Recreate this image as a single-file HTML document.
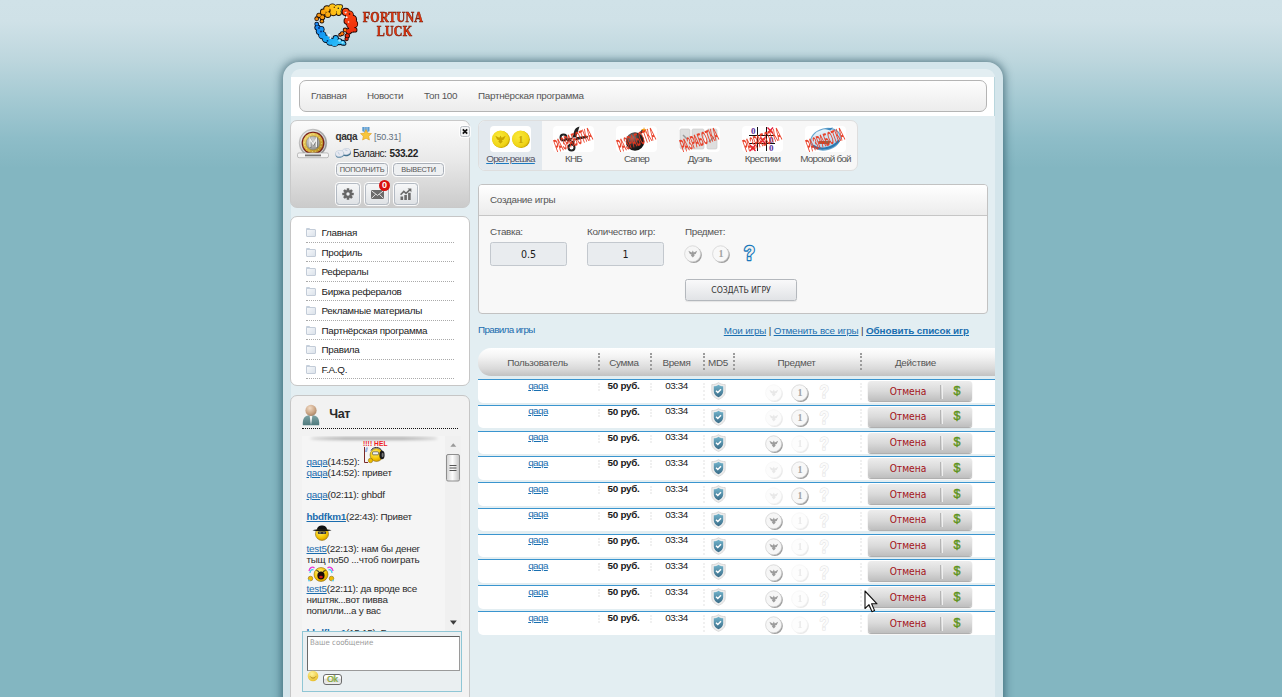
<!DOCTYPE html>
<html lang="ru">
<head>
<meta charset="utf-8">
<title>Fortuna Luck</title>
<style>
*{box-sizing:border-box;margin:0;padding:0}
html,body{width:1282px;height:697px;overflow:hidden}
body{position:relative;font-family:"Liberation Sans",sans-serif;font-size:9.9px;letter-spacing:-0.3px;color:#333;
 background:#83b6c1 linear-gradient(to bottom,#d0e2e8 0px,#cfe1e7 22px,#bed7de 58px,#a5cad3 98px,#8ebdc8 138px,#83b6c1 168px,#83b6c1 100%);}
a{color:#1a6fb0}
.abs{position:absolute}
#wrap{position:absolute;left:283px;top:62px;width:720px;height:660px;background:#d4e5eb;border-radius:16px 16px 0 0;box-shadow:0 0 10px 1px rgba(20,60,75,.65)}
#inner{position:absolute;left:8px;top:7px;width:704px;height:660px;background:#e3eef2;border-radius:9px 9px 0 0}
#white{position:absolute;left:0;top:8px;width:704px;height:39px;background:#fff;border-right:1px solid #b9d6dd}
#nav{position:absolute;left:8px;top:11px;width:688px;height:32px;border:1px solid #b4b4b4;border-radius:7px;background:linear-gradient(#fdfdfd,#ececec)}
#nav span{position:absolute;top:9px;color:#555;white-space:nowrap}
.panel{position:absolute;border:1px solid #c6c6c6;border-radius:7px;background:#fff}
.sbtn{position:absolute;top:42px;height:13px;border:1px solid #a9afb8;border-radius:3.5px;background:#eef0f2;box-shadow:0 0 0 1px rgba(255,255,255,.9);font-size:7.4px;line-height:11.5px;text-align:center;color:#555;letter-spacing:-.25px}
.ibtn{position:absolute;top:61.5px;width:24px;height:22.5px;border:1px solid #b3bac3;border-radius:3.5px;background:linear-gradient(#f6f7f8,#dfe2e5);box-shadow:0 0 0 1px rgba(255,255,255,.9)}
.mi{position:absolute;left:15px;width:148px;height:19.5px;padding-left:15.5px;line-height:19px;border-bottom:1px dotted #aaa;color:#222;white-space:nowrap}
.mi:before{content:"";position:absolute;left:.3px;top:6px;width:8px;height:6px;border:1px solid #c3ccd8;border-radius:1px;background:linear-gradient(135deg,#f6f8fb,#dbe2ea)}
.mi:after{content:"";position:absolute;left:.3px;top:5px;width:4px;height:2px;background:#c5cfdb;border-radius:1px 1px 0 0}
.cl{position:absolute;left:4.5px;line-height:11px;white-space:nowrap;color:#2b2b2b;letter-spacing:-.25px}
.cl a{color:#1a6cae}
.tab{position:absolute;top:0;width:63px;height:49px}
.tab.act{background:#e3e9ee}
.tab .ic{position:absolute;left:10.5px;top:4.5px;width:41px;height:26px;background:#fff;border-radius:4px;overflow:hidden}
.tab .ic svg{position:absolute;left:0;top:0}
.tab .lb{position:absolute;left:-10px;width:83px;top:31.5px;text-align:center;line-height:12px;color:#555;letter-spacing:-.78px;white-space:nowrap}
.tab.act .lb{text-decoration:underline;text-decoration-color:#1a7ac0;color:#556}
.st{position:absolute;left:-2.5px;top:10.8px;width:46px;text-align:center;font-weight:bold;font-size:5.9px;line-height:8px;letter-spacing:-.05px;color:#e8371f;transform:rotate(-20deg) scaleY(3.15);white-space:nowrap;opacity:.93}
.flab{top:41px;color:#555;white-space:nowrap;letter-spacing:-.33px}
.inp{position:absolute;top:56.5px;width:77px;height:24px;border:1px solid #c3c8ce;border-radius:2.5px;background:#e9ecef;text-align:center;font-family:"DejaVu Sans Condensed","DejaVu Sans",sans-serif;font-size:10.6px;line-height:23px;letter-spacing:0;color:#1a1a1a}
.th{position:absolute;margin-left:-1px;top:8.5px;text-align:center;color:#555;white-space:nowrap;letter-spacing:-.3px;line-height:12px}
.vs{position:absolute;top:5px;height:17px;border-left:2px dotted #9c9c9c}
.row{position:absolute;left:187px;width:517px;height:23.6px;background:#fff;border-top:1px solid #3a95cf;border-radius:0 0 0 5px}
.vs2{position:absolute;top:3px;height:17px;border-left:2px dotted #f0f0f0}
.btn{position:absolute;left:389.5px;top:1px;width:104px;height:20px;border-radius:3px;background:linear-gradient(#ededed,#dadada 50%,#bebebe);box-shadow:0 1px 1px rgba(0,0,0,.35);font-family:"DejaVu Sans Condensed","DejaVu Sans",sans-serif;letter-spacing:0}
.btn .b1{position:absolute;left:0;width:73px;padding-left:9px;text-align:center;top:.6px;line-height:19.5px;font-size:10.2px;color:#a3121a;border-right:1px solid #b4b4b4;height:14px;margin-top:3px;line-height:13.5px}
.btn .b2{position:absolute;left:74px;width:30px;text-align:center;top:.6px;line-height:19.5px;font-family:"Liberation Sans",sans-serif;font-size:12.5px;font-weight:normal;-webkit-text-stroke:.45px #5f9420;color:#5f9420;border-left:1px solid #efefef;height:14px;margin-top:3px;line-height:13.5px}
.lt{font-family:"Liberation Serif",serif;font-weight:bold;font-size:12px;line-height:14px;text-align:center;letter-spacing:.2px;color:#e8380e;-webkit-text-stroke:.45px #6e1606;transform:scaleY(1.25);white-space:nowrap}
</style>
</head>
<body>
<!-- LOGO -->
<div id="logo" class="abs" style="left:312px;top:3px;width:125px;height:50px">
 <svg class="abs" style="left:0;top:0" width="48" height="48" viewBox="0 0 48 48">
  <defs>
   <linearGradient id="lo" gradientUnits="userSpaceOnUse" x1="4" y1="20" x2="28" y2="4"><stop offset="0" stop-color="#f5820e"/><stop offset=".6" stop-color="#fdb414"/><stop offset="1" stop-color="#ffd21e"/></linearGradient>
   <linearGradient id="lr" gradientUnits="userSpaceOnUse" x1="32" y1="6" x2="40" y2="36"><stop offset="0" stop-color="#ff4a12"/><stop offset="1" stop-color="#e6240a"/></linearGradient>
   <linearGradient id="lb" gradientUnits="userSpaceOnUse" x1="4" y1="22" x2="32" y2="42"><stop offset="0" stop-color="#1a86f2"/><stop offset=".5" stop-color="#14a8f6"/><stop offset="1" stop-color="#3cc4f8"/></linearGradient>
  </defs>
  <g><circle cx="4.7" cy="15.7" r="2.35" fill="#1e0c00"/><circle cx="7.0" cy="12.3" r="2.65" fill="#1e0c00"/><circle cx="10.3" cy="14.3" r="2.95" fill="#1e0c00"/><circle cx="9.9" cy="18.3" r="2.25" fill="#1e0c00"/><circle cx="11.3" cy="8.9" r="3.35" fill="#1e0c00"/><circle cx="15.0" cy="6.1" r="3.75" fill="#1e0c00"/><circle cx="15.8" cy="11.6" r="3.35" fill="#1e0c00"/><circle cx="20.4" cy="4.6" r="4.15" fill="#1e0c00"/><circle cx="21.3" cy="9.3" r="3.85" fill="#1e0c00"/><circle cx="26.0" cy="5.4" r="4.15" fill="#1e0c00"/><circle cx="26.7" cy="9.8" r="3.15" fill="#1e0c00"/><circle cx="28.7" cy="3.6" r="2.35" fill="#1e0c00"/><circle cx="33.7" cy="8.9" r="4.05" fill="#200300"/><circle cx="37.4" cy="11.9" r="4.45" fill="#200300"/><circle cx="40.4" cy="16.4" r="4.65" fill="#200300"/><circle cx="42.0" cy="21.0" r="4.15" fill="#200300"/><circle cx="38.7" cy="21.6" r="4.45" fill="#200300"/><circle cx="35.3" cy="17.9" r="3.75" fill="#200300"/><circle cx="39.8" cy="26.1" r="3.75" fill="#200300"/><circle cx="36.8" cy="28.3" r="3.25" fill="#200300"/><circle cx="35.3" cy="32.8" r="2.65" fill="#200300"/><circle cx="34.6" cy="36.0" r="2.15" fill="#200300"/><circle cx="42.8" cy="26.9" r="2.65" fill="#200300"/><circle cx="33.1" cy="26.9" r="2.35" fill="#200300"/><circle cx="30.2" cy="30.6" r="2.35" fill="#200300"/><circle cx="28.2" cy="31.8" r="1.95" fill="#200300"/><circle cx="4.7" cy="21.0" r="2.35" fill="#010e24"/><circle cx="5.5" cy="24.6" r="3.15" fill="#010e24"/><circle cx="7.7" cy="28.3" r="3.85" fill="#010e24"/><circle cx="10.3" cy="32.1" r="4.15" fill="#010e24"/><circle cx="9.2" cy="26.3" r="3.35" fill="#010e24"/><circle cx="14.0" cy="35.8" r="4.15" fill="#010e24"/><circle cx="18.1" cy="38.6" r="4.15" fill="#010e24"/><circle cx="22.6" cy="39.4" r="4.45" fill="#010e24"/><circle cx="23.7" cy="35.2" r="3.15" fill="#010e24"/><circle cx="27.1" cy="38.8" r="3.45" fill="#010e24"/><circle cx="30.8" cy="39.7" r="2.95" fill="#010e24"/><circle cx="32.5" cy="40.7" r="1.95" fill="#010e24"/><circle cx="4.7" cy="15.7" r="1.5" fill="url(#lo)"/><circle cx="7.0" cy="12.3" r="1.8" fill="url(#lo)"/><circle cx="10.3" cy="14.3" r="2.0" fill="url(#lo)"/><circle cx="9.9" cy="18.3" r="1.3" fill="url(#lo)"/><circle cx="11.3" cy="8.9" r="2.5" fill="url(#lo)"/><circle cx="15.0" cy="6.1" r="2.8" fill="url(#lo)"/><circle cx="15.8" cy="11.6" r="2.5" fill="url(#lo)"/><circle cx="20.4" cy="4.6" r="3.3" fill="url(#lo)"/><circle cx="21.3" cy="9.3" r="3.0" fill="url(#lo)"/><circle cx="26.0" cy="5.4" r="3.3" fill="url(#lo)"/><circle cx="26.7" cy="9.8" r="2.2" fill="url(#lo)"/><circle cx="28.7" cy="3.6" r="1.5" fill="url(#lo)"/><circle cx="33.7" cy="8.9" r="3.1" fill="url(#lr)"/><circle cx="37.4" cy="11.9" r="3.6" fill="url(#lr)"/><circle cx="40.4" cy="16.4" r="3.7" fill="url(#lr)"/><circle cx="42.0" cy="21.0" r="3.3" fill="url(#lr)"/><circle cx="38.7" cy="21.6" r="3.6" fill="url(#lr)"/><circle cx="35.3" cy="17.9" r="2.8" fill="url(#lr)"/><circle cx="39.8" cy="26.1" r="2.8" fill="url(#lr)"/><circle cx="36.8" cy="28.3" r="2.4" fill="url(#lr)"/><circle cx="35.3" cy="32.8" r="1.8" fill="url(#lr)"/><circle cx="34.6" cy="36.0" r="1.3" fill="url(#lr)"/><circle cx="42.8" cy="26.9" r="1.8" fill="url(#lr)"/><circle cx="33.1" cy="26.9" r="1.5" fill="#ff7a12"/><circle cx="30.2" cy="30.6" r="1.5" fill="#ff7a12"/><circle cx="28.2" cy="31.8" r="1.0" fill="#ff7a12"/><circle cx="4.7" cy="21.0" r="1.5" fill="url(#lb)"/><circle cx="5.5" cy="24.6" r="2.2" fill="url(#lb)"/><circle cx="7.7" cy="28.3" r="3.0" fill="url(#lb)"/><circle cx="10.3" cy="32.1" r="3.3" fill="url(#lb)"/><circle cx="9.2" cy="26.3" r="2.5" fill="url(#lb)"/><circle cx="14.0" cy="35.8" r="3.3" fill="url(#lb)"/><circle cx="18.1" cy="38.6" r="3.3" fill="url(#lb)"/><circle cx="22.6" cy="39.4" r="3.6" fill="url(#lb)"/><circle cx="23.7" cy="35.2" r="2.2" fill="url(#lb)"/><circle cx="27.1" cy="38.8" r="2.5" fill="url(#lb)"/><circle cx="30.8" cy="39.7" r="2.0" fill="url(#lb)"/><circle cx="32.5" cy="40.7" r="1.0" fill="url(#lb)"/><circle cx="26.3" cy="5.2" r=".8" fill="#222"/><circle cx="22.3" cy="4.2" r=".7" fill="#5a2a00"/><circle cx="18" cy="6.5" r=".7" fill="#7a3a00"/><circle cx="33.6" cy="9.6" r="1" fill="#fff"/><circle cx="34.6" cy="14.3" r="1" fill="#fff"/><circle cx="36.5" cy="19" r=".8" fill="#fff"/><circle cx="33.2" cy="8.8" r=".5" fill="#111"/><circle cx="37.5" cy="11" r=".8" fill="#111"/><circle cx="17" cy="32.2" r="1.5" fill="#e8f6ff"/><circle cx="18.2" cy="35" r="1" fill="#e8f6ff"/><circle cx="27.5" cy="37.5" r="1.3" fill="#9ae6ff"/><circle cx="30.5" cy="39.5" r="1.1" fill="#9ae6ff"/><circle cx="7" cy="25" r="1.1" fill="#0a3a8a"/><circle cx="9" cy="28.5" r="1" fill="#0a3a8a"/><circle cx="15.5" cy="37.8" r=".9" fill="#062a6a"/></g>
 </svg>
 <span class="abs lt" style="left:50px;top:6.5px;width:62px">FORTUNA</span>
 <span class="abs lt" style="left:51.5px;top:21px;width:62px">LUCK</span>
</div>

<div id="wrap">
 <div id="inner">
  <div id="white"></div>
  <div id="nav">
   <span style="left:11px">Главная</span>
   <span style="left:67px">Новости</span>
   <span style="left:124px">Топ 100</span>
   <span style="left:178px">Партнёрская программа</span>
  </div>
  <!-- USER PANEL -->
  <div id="user" class="panel" style="left:-1px;top:51px;width:180px;height:88px;background:linear-gradient(#fbfbfb,#e9e9e9 45%,#cbcbcb);border-color:#c9c9c9">
   <!-- avatar -->
   <svg class="abs" style="left:5px;top:6px" width="34" height="32" viewBox="0 0 34 32">
    <defs>
     <linearGradient id="sv" x1="0" y1="0" x2="1" y2="1"><stop offset="0" stop-color="#eeeeee"/><stop offset=".45" stop-color="#a8a8a8"/><stop offset="1" stop-color="#7c7c7c"/></linearGradient>
     <linearGradient id="gd" x1="0" y1="0" x2="1" y2="1"><stop offset="0" stop-color="#f6e38a"/><stop offset=".5" stop-color="#d9b23a"/><stop offset="1" stop-color="#a87c1c"/></linearGradient>
     <radialGradient id="sv2" cx=".4" cy=".35" r=".7"><stop offset="0" stop-color="#dcdcdc"/><stop offset="1" stop-color="#8a8a8a"/></radialGradient>
    </defs>
    <circle cx="17" cy="16" r="13.8" fill="url(#sv)" stroke="#a9a9a9" stroke-width=".6"/>
    <circle cx="17" cy="16" r="12.3" fill="none" stroke="#fff" stroke-opacity=".55" stroke-width="1"/>
    <circle cx="17" cy="16" r="11.3" fill="#7a1c14"/>
    <circle cx="17" cy="16" r="10.2" fill="url(#gd)"/>
    <circle cx="17" cy="16" r="8.6" fill="none" stroke="#fff3b0" stroke-width=".8" stroke-dasharray=".8 2.6" stroke-opacity=".9"/>
    <circle cx="17" cy="16" r="6.9" fill="url(#sv2)" stroke="#8b7a3a" stroke-width=".4"/>
    <path d="M14 20.3V11.8L17.2 17.2L20.4 11.8V20.3" fill="none" stroke="#555" stroke-opacity=".7" stroke-width="1.5" transform="translate(.6 .6)"/>
    <path d="M14 20.3V11.8L17.2 17.2L20.4 11.8V20.3" fill="none" stroke="#f1f1f1" stroke-width="1.3"/>
    <rect x="1.5" y="25.9" width="31" height="4.8" rx="1.6" fill="#f4f4f4" stroke="#a5a5a5" stroke-width=".7"/>
    <rect x="9" y="27.5" width="16" height="1.8" fill="#555" fill-opacity=".8"/>
   </svg>
   <b class="abs" style="left:44.5px;top:9.5px;font-size:10px;letter-spacing:-.4px;color:#333">qaqa</b>
   <!-- star -->
   <svg class="abs" style="left:69px;top:5.5px" width="12" height="14" viewBox="0 0 12 14">
    <path d="M2.3 0h7.2v4.2L5.9 5.5 2.3 4.2z" fill="#5b9bd0"/><path d="M4.4 0h.9v4.6h-.9zM6.6 0h.9v4.6h-.9z" fill="#a9cdea"/>
    <path d="M6 2.6l1.7 3.5 3.8.5-2.8 2.6.7 3.8L6 11.2 2.6 13l.7-3.8L.5 6.6l3.8-.5z" fill="#f7c63e" stroke="#e0a020" stroke-width=".6"/>
   </svg>
   <span class="abs" style="left:83px;top:10.5px;font-size:9px;color:#61707f;letter-spacing:-.1px">[50.31]</span>
   <!-- money -->
   <svg class="abs" style="left:43.5px;top:26px" width="17" height="11" viewBox="0 0 17 11">
    <ellipse cx="11.6" cy="5.8" rx="4.3" ry="3.4" fill="#3f6f8e" transform="rotate(-12 11.6 5.8)"/>
    <ellipse cx="11.2" cy="4.6" rx="4.2" ry="3.1" fill="#e9ebf2" stroke="#b7c6d6" stroke-width=".5" transform="rotate(-12 11.2 4.6)"/>
    <ellipse cx="4.8" cy="7.4" rx="4.3" ry="3.3" fill="#5a86a4" transform="rotate(-10 4.8 7.4)"/>
    <ellipse cx="4.6" cy="6.5" rx="4.2" ry="3.1" fill="#e6e9f1" stroke="#b7c6d6" stroke-width=".5" transform="rotate(-10 4.6 6.5)"/>
    <path d="M3.2 5.2l1.2 2.4M9.8 2.8l2.6.8" stroke="#a9bfd4" stroke-width=".7" fill="none"/>
   </svg>
   <span class="abs" style="left:62px;top:27px;font-size:10px;letter-spacing:-.5px;color:#222;white-space:nowrap">Баланс: <b style="letter-spacing:-.4px;margin-left:1px">533.22</b></span>
   <span class="sbtn" style="left:45px;width:52px">ПОПОЛНИТЬ</span>
   <span class="sbtn" style="left:102px;width:51px">ВЫВЕСТИ</span>
   <span class="ibtn" style="left:44.5px">
    <svg width="12" height="12" viewBox="-6 -6 12 12" style="position:absolute;left:5px;top:4.5px"><g fill="#666"><circle r="3.9"/><g id="tt"><rect x="-1.3" y="-5.7" width="2.6" height="11.4" rx=".5"/></g><use href="#tt" transform="rotate(45)"/><use href="#tt" transform="rotate(90)"/><use href="#tt" transform="rotate(135)"/></g><circle r="1.7" fill="#eceef0"/></svg>
   </span>
   <span class="ibtn" style="left:73.5px">
    <svg width="13" height="9" viewBox="0 0 13 9" style="position:absolute;left:5px;top:6.5px"><rect width="13" height="9" rx="1" fill="#6b6b6b"/><path d="M.6.9L6.5 5.4 12.4.9M.6 8.3L4.6 4.3M12.4 8.3L8.4 4.3" fill="none" stroke="#eee" stroke-width=".9"/></svg>
   </span>
   <span class="ibtn" style="left:102.5px">
    <svg width="12" height="12" viewBox="0 0 12 12" style="position:absolute;left:5.5px;top:4px"><g fill="#6b6b6b"><rect x=".5" y="8.5" width="2.6" height="3.5"/><rect x="4.3" y="7" width="2.6" height="5"/><rect x="8.1" y="4.8" width="2.6" height="7.2"/><path d="M7.6.4h3.8v3.8z"/></g><path d="M.6 6.8L3.8 3.4 6 5.4 10 1.6" fill="none" stroke="#6b6b6b" stroke-width="1.5"/></svg>
   </span>
   <span class="abs" style="left:88px;top:59px;width:11px;height:11px;border-radius:6px;background:#d8100f;color:#fff;font-weight:bold;font-size:9px;line-height:11px;text-align:center;letter-spacing:0">0</span>
   <span class="abs" style="left:168.5px;top:4.5px;width:10px;height:11px;border:1px solid #b9bec4;border-radius:2.5px;background:#f2f3f4;box-shadow:0 0 0 1px rgba(255,255,255,.8)"><svg width="8" height="9" viewBox="0 0 8 9" style="position:absolute;left:0;top:0"><path d="M1.8 2.3L6.2 6.7M6.2 2.3L1.8 6.7" stroke="#111" stroke-width="1.7"/></svg></span>
  </div>
  <!-- MENU -->
  <div id="menu" class="panel" style="left:-1px;top:147px;width:180px;height:170px">
   <div class="mi" style="top:6px">Главная</div>
   <div class="mi" style="top:25.5px">Профиль</div>
   <div class="mi" style="top:45px">Рефералы</div>
   <div class="mi" style="top:64.5px">Биржа рефералов</div>
   <div class="mi" style="top:84px">Рекламные материалы</div>
   <div class="mi" style="top:103.5px">Партнёрская программа</div>
   <div class="mi" style="top:123px">Правила</div>
   <div class="mi" style="top:142.5px">F.A.Q.</div>
  </div>
  <!-- CHAT -->
  <div id="chat" class="panel" style="left:-1px;top:325.5px;width:180px;height:340px;background:#f2f2f2">
   <svg class="abs" style="left:10.5px;top:8.5px" width="18" height="22" viewBox="0 0 18 22">
    <defs><radialGradient id="hd" cx=".4" cy=".3" r=".8"><stop offset="0" stop-color="#f3dcc6"/><stop offset=".6" stop-color="#c9a484"/><stop offset="1" stop-color="#9b7a5e"/></radialGradient>
    <linearGradient id="bd" x1="0" y1="0" x2="0" y2="1"><stop offset="0" stop-color="#7fa4a6"/><stop offset="1" stop-color="#4f7a7d"/></linearGradient></defs>
    <path d="M.8 21.2C.4 14.5 2.5 11 9 11s8.6 3.5 8.2 10.2z" fill="url(#bd)"/>
    <path d="M7.6 11.5L9 21.2 10.4 11.5z" fill="#f4f4f4"/>
    <circle cx="9" cy="6.4" r="5.6" fill="url(#hd)"/>
   </svg>
   <b class="abs" style="left:38.2px;top:11.8px;font-size:12.6px;line-height:15px;letter-spacing:-.35px;color:#2a2a2a">Чат</b>
   <div class="abs" style="left:11px;top:32px;width:156px;border-top:1px dotted #111"></div>
   <div id="cbox" class="abs" style="left:11px;top:40px;width:159px;height:196px;overflow:hidden;background:#f5f5f5">
    <div class="abs" style="left:8px;top:1.2px;width:128px;height:3.4px;border-radius:50%;background:rgba(0,0,0,.3);filter:blur(1.7px)"></div>
    <div class="abs" style="left:143px;top:0;width:16px;height:196px;background:#f0f0f0"></div>
    <!-- lines -->
    <div class="cl" style="top:20.5px"><a href="#">qaqa</a>(14:52):</div>
    <div class="cl" style="top:31.5px"><a href="#">qaqa</a>(14:52): привет</div>
    <div class="cl" style="top:53.5px"><a href="#">qaqa</a>(02:11): ghbdf</div>
    <div class="cl" style="top:75.5px"><a href="#"><b>hbdfkm1</b></a>(22:43): Привет</div>
    <div class="cl" style="top:107.2px"><a href="#">test5</a>(22:13): нам бы денег</div>
    <div class="cl" style="top:118.5px">тыщ по50 ...чтоб поиграть</div>
    <div class="cl" style="top:147.2px"><a href="#">test5</a>(22:11): да вроде все</div>
    <div class="cl" style="top:158.5px">ништяк...вот пивва</div>
    <div class="cl" style="top:169.7px">попилли...а у вас</div>
    <div class="cl" style="top:191px"><a href="#"><b>hbdfkm1</b></a>(15:15): В</div>
    <!-- emoji 1 -->
    <span class="abs" style="left:61px;top:4.3px;font-size:6.6px;font-weight:bold;color:#ee1a20;letter-spacing:.1px;white-space:nowrap;line-height:7px">!!!! HEL</span>
    <svg class="abs" style="left:61px;top:10.5px" width="23" height="18" viewBox="0 0 23 18">
     <defs><radialGradient id="ye" cx=".4" cy=".35" r=".75"><stop offset="0" stop-color="#fff27a"/><stop offset=".6" stop-color="#f4c400"/><stop offset="1" stop-color="#c98f00"/></radialGradient></defs>
     <path d="M1.5 1V16.5H5" fill="none" stroke="#7a2a2a" stroke-width="1"/><path d="M3.5 1.5L2.5 6M4.5 1.5L3.5 6" stroke="#4a7ad0" stroke-width=".6"/>
     <circle cx="13.5" cy="9" r="6.5" fill="url(#ye)" stroke="#7a5a00" stroke-width=".5"/>
     <rect x="9.5" y="5.8" width="6" height="3" rx="1" fill="#f2f2f2" stroke="#333" stroke-width=".6"/>
     <ellipse cx="19" cy="9" rx="2.6" ry="4.2" fill="#1a1a1a"/><ellipse cx="19.6" cy="9" rx="1" ry="2.3" fill="#777"/>
     <path d="M8 4.5C10 .5 17 .5 19 5" fill="none" stroke="#222" stroke-width="1"/>
     <circle cx="7.5" cy="14.5" r="2.2" fill="#f0bd00" stroke="#7a5a00" stroke-width=".5"/>
    </svg>
    <!-- emoji 2: hat -->
    <svg class="abs" style="left:10px;top:88.5px" width="20" height="17" viewBox="0 0 20 17">
     <circle cx="10" cy="9.8" r="6.6" fill="url(#ye)" stroke="#7a5a00" stroke-width=".5"/>
     <path d="M.5 6.2C5 4.8 15 4.8 19.5 6.2 15 7.6 5 7.6.5 6.2z" fill="#111"/><path d="M5 5.8C5 .2 15 .2 15 5.8z" fill="#111"/>
     <rect x="5.8" y="7.6" width="8.4" height="2.4" rx="1" fill="#333"/><circle cx="8" cy="8.8" r=".6" fill="#ddd"/><circle cx="12" cy="8.8" r=".6" fill="#ddd"/>
    </svg>
    <!-- emoji 3: cry -->
    <svg class="abs" style="left:5px;top:129px" width="28" height="18" viewBox="0 0 28 18">
     <circle cx="14" cy="9.5" r="7" fill="url(#ye)" stroke="#7a5a00" stroke-width=".5"/>
     <ellipse cx="14" cy="10.5" rx="3.6" ry="4" fill="#1a0a0a"/><ellipse cx="14" cy="12" rx="1.8" ry="1.3" fill="#d01818"/>
     <path d="M9.5 5.5L12 6.5M18.5 5.5L16 6.5" stroke="#222" stroke-width="1"/>
     <path d="M7.5 3C5 1 2.5 3 2 6M20.5 3C23 1 25.5 3 26 6" fill="none" stroke="#e63ad6" stroke-width="1.3"/>
     <path d="M6.5 5C4.5 4 3 6 3 8M21.5 5C23.5 4 25 6 25 8" fill="none" stroke="#38c8f0" stroke-width="1.2"/>
     <circle cx="3.5" cy="13.5" r="2.3" fill="#f0bd00" stroke="#7a5a00" stroke-width=".5"/><circle cx="24.5" cy="13.5" r="2.3" fill="#f0bd00" stroke="#7a5a00" stroke-width=".5"/>
     <circle cx="2" cy="15.5" r="1" fill="#6ad0f0"/><circle cx="26" cy="15.5" r="1" fill="#6ad0f0"/>
    </svg>
    <!-- scrollbar -->
    <svg class="abs" style="left:143px;top:0" width="16" height="196" viewBox="0 0 16 196">
     <defs><linearGradient id="th" x1="0" y1="0" x2="1" y2="0"><stop offset="0" stop-color="#d0d0d0"/><stop offset=".45" stop-color="#fdfdfd"/><stop offset="1" stop-color="#c4c4c4"/></linearGradient></defs>
     <path d="M5.3 10.8L8.3 7.3 11.3 10.8z" fill="#9a9a9a"/>
     <rect x="1.5" y="18.5" width="13" height="26.5" rx="1.5" fill="url(#th)" stroke="#8e8e8e" stroke-width="1"/>
     <path d="M4.5 29.5h7M4.5 32h7M4.5 34.5h7" stroke="#555" stroke-width="1"/>
     <path d="M5 184.5h6.8L8.4 188.8z" fill="#3c3c3c"/>
    </svg>
   </div>
   <div class="abs" style="left:11px;top:235.5px;width:160px;height:61px;border:1px solid #8fc6d5;background:#eaeff1">
    <div class="abs" style="left:4px;top:4px;width:153px;height:34.5px;background:#fff;border:1px solid #9a9a9a;border-top:1.5px solid #5f5f5f;border-left:1.5px solid #6a6a6a"><span style="position:absolute;left:2px;top:.5px;font-family:'DejaVu Sans Condensed','DejaVu Sans',sans-serif;font-size:7.8px;letter-spacing:0;color:#9a9a9a;white-space:nowrap">Ваше сообщение</span></div>
    <svg class="abs" style="left:3.8px;top:37.6px" width="12" height="12" viewBox="0 0 12 12"><defs><radialGradient id="sm" cx=".4" cy=".3" r=".8"><stop offset="0" stop-color="#fff39a"/><stop offset="1" stop-color="#e6b81e"/></radialGradient></defs><circle cx="6" cy="6" r="5.3" fill="url(#sm)"/><path d="M3.2 6.5C4.5 8.6 7.5 8.6 8.8 6.5" fill="none" stroke="#a67c0a" stroke-width=".9"/></svg>
    <span class="abs" style="left:20px;top:42px;width:19px;height:11.3px;border:1.3px solid #6c6c6c;border-radius:3px;background:linear-gradient(#fff,#fff 35%,#dcdcdc 45%,#eee);font-family:'Liberation Sans',sans-serif;font-size:8.6px;line-height:8.6px;text-align:center;color:#84a52c;letter-spacing:-.2px;text-shadow:.4px 0 0 #9ad0e0,-.4px 0 0 #c9b53a">Ok</span>
   </div>
  </div>
  <!-- GAMES -->
  <div id="games" class="panel" style="left:187px;top:51px;width:380px;height:51px;background:#f7f7f7;border-color:#dedede;overflow:hidden">
   <div class="tab act" style="left:0px"><span class="ic"><svg width="40" height="26" viewBox="0 0 40 26"><defs><radialGradient id="gc" cx=".4" cy=".35" r=".8"><stop offset="0" stop-color="#faea3a"/><stop offset=".7" stop-color="#f0d416"/><stop offset="1" stop-color="#c9a600"/></radialGradient></defs>
   <ellipse cx="11.2" cy="13.6" rx="8.7" ry="8.5" fill="#c7a400"/><circle cx="10.5" cy="13" r="8.6" fill="url(#gc)"/>
   <ellipse cx="31.2" cy="13.6" rx="8.7" ry="8.5" fill="#c7a400"/><circle cx="30.5" cy="13" r="8.6" fill="url(#gc)"/>
   <path d="M10.5 9.5l1.2 2.2 4-2-1.8 3.8-2 .8.8 1.2-2.2 2.2-2.2-2.2.8-1.2-2-.8-1.8-3.8 4 2z" fill="#c9a500"/>
   <text x="30.5" y="17" text-anchor="middle" font-family="Liberation Serif,serif" font-weight="bold" font-size="11" fill="#c9a500">1</text></svg></span><span class="lb">Орел-решка</span></div>
   <div class="tab" style="left:63px"><span class="ic"><svg width="40" height="26" viewBox="0 0 40 26"><g fill="none" stroke="#222" stroke-width="2"><circle cx="10.5" cy="11.5" r="3"/><circle cx="18.5" cy="21.5" r="3"/></g><path d="M13 12.5l21-2.8c1.2 0 1.2 1.8 0 2.400l-19.5 3.600zM20.5 19L26.5.4c-3 .6-4.8 2.600-5.400 5l-3.8 12z" fill="#222"/></svg><span class="st">РАЗРАБОТКА</span></span><span class="lb">КНБ</span></div>
   <div class="tab" style="left:126px"><span class="ic"><svg width="40" height="26" viewBox="0 0 40 26"><defs><radialGradient id="bm" cx=".35" cy=".3" r=".8"><stop offset="0" stop-color="#8a8a8a"/><stop offset=".5" stop-color="#2a2a2a"/><stop offset="1" stop-color="#0a0a0a"/></radialGradient></defs><circle cx="19" cy="15.5" r="9.3" fill="url(#bm)"/><path d="M24 7.5l3-3.5" stroke="#333" stroke-width="2"/><path d="M28 1l.8 2.2 2.2.3-1.8 1.3.5 2.2-1.7-1.3-2 1 .8-2.2-1.6-1.5 2.2-.1z" fill="#f2a01a"/></svg><span class="st">РАЗРАБОТКА</span></span><span class="lb">Сапер</span></div>
   <div class="tab" style="left:189px"><span class="ic"><svg width="40" height="26" viewBox="0 0 40 26"><g fill="#dedede" stroke="#c8c8c8" stroke-width=".6"><rect x="1" y="3" width="10" height="20" rx="1.5"/><rect x="13" y="3" width="12" height="20" rx="1.5"/><rect x="28" y="3" width="10" height="20" rx="1.5"/></g><path d="M4 9l4 4M30 16l5-5" stroke="#999" stroke-width="1.5"/></svg><span class="st">РАЗРАБОТКА</span></span><span class="lb">Дуэль</span></div>
   <div class="tab" style="left:252px"><span class="ic"><svg width="40" height="26" viewBox="0 0 40 26"><path d="M15.5 1v24M24.5 1v24M7 9.5h26M7 17.5h26" stroke="#111" stroke-width="1"/><g font-family="Liberation Serif,serif" font-weight="bold" font-size="9"><text x="9" y="8" fill="#5a2a9a">0</text><text x="27" y="25" fill="#5a2a9a">0</text><text x="27" y="17" fill="#5a2a9a">0</text></g><path d="M25.5 1.5l5.5 6M31 1.5l-5.5 6M8 19l5.5 6M13.5 19l-5.5 6M18 11.5l5 5.5M23 11.5l-5 5.5" stroke="#e6183a" stroke-width="1.3"/></svg><span class="st">РАЗРАБОТКА</span></span><span class="lb">Крестики</span></div>
   <div class="tab" style="left:315px"><span class="ic"><svg width="40" height="26" viewBox="0 0 40 26"><defs><linearGradient id="se" x1="0" y1="0" x2="0" y2="1"><stop offset="0" stop-color="#eaf4fb"/><stop offset="1" stop-color="#a9d0ea"/></linearGradient></defs><ellipse cx="20.5" cy="13.2" rx="15" ry="10.5" fill="url(#se)" stroke="#6aa6cf" stroke-width="1.2" transform="rotate(-14 20.5 13.2)"/><path d="M8 19.5c6 5 19 4 26-5" fill="none" stroke="#2a78b0" stroke-width="2.2"/><path d="M20 3l8-1.5-2.5 3z" fill="#3a86bd"/><path d="M13 15h13l-2 3h-9z" fill="#8a6a4a"/></svg><span class="st">РАЗРАБОТКА</span></span><span class="lb">Морской бой</span></div>
  </div>
  <!-- CREATE -->
  <div id="create" class="panel" style="left:187px;top:115px;width:510px;height:129.5px;background:#f8f8f8;border-radius:4px;border-color:#c2c2c2">
   <div class="abs" style="left:0;top:0;width:508px;height:31px;border-bottom:1px solid #c6c6c6;background:linear-gradient(#fff,#ececec);border-radius:3px 3px 0 0"></div>
   <span class="abs" style="left:11px;top:9px;color:#555;white-space:nowrap;letter-spacing:-.28px">Создание игры</span>
   <span class="abs flab" style="left:11px">Ставка:</span>
   <span class="abs flab" style="left:108px">Количество игр:</span>
   <span class="abs flab" style="left:206px">Предмет:</span>
   <span class="inp" style="left:11px">0.5</span>
   <span class="inp" style="left:108px">1</span>
   <svg class="abs" style="left:204.5px;top:60px;opacity:1" width="18" height="18" viewBox="0 0 18 18"><circle cx="9.8" cy="10" r="8" fill="#9e9e9e"/><circle cx="8.6" cy="8.8" r="8" fill="#f6f6f6" stroke="#d0d0d0" stroke-width=".7"/><path d="M8.8 5.6l1 1.8 3.4-1.7-1.5 3.2-1.7.7.7 1-1.9 1.9-1.9-1.9.7-1-1.7-.7-1.5-3.2 3.4 1.7z" fill="#9c9c9c"/></svg><svg class="abs" style="left:233px;top:60px;opacity:1" width="18" height="18" viewBox="0 0 18 18"><circle cx="9.8" cy="10" r="8" fill="#9e9e9e"/><circle cx="8.6" cy="8.8" r="8" fill="#f8f8f8" stroke="#d0d0d0" stroke-width=".7"/><text x="8.8" y="12.3" text-anchor="middle" font-family="Liberation Serif,serif" font-weight="bold" font-size="10" fill="#a2a2a2">1</text></svg>
   <svg class="abs" style="left:262px;top:56.5px" width="18" height="24" viewBox="0 0 18 24"><text x="8.3" y="18.3" text-anchor="middle" font-family="Liberation Sans,sans-serif" font-weight="bold" font-size="20.5" fill="#f4f2ee" stroke="#1b78bd" stroke-width="2.7" stroke-linejoin="round" transform="translate(8.3 0) scale(.86 1) translate(-8.3 0)" paint-order="stroke">?</text></svg>
   <span class="abs" style="left:206px;top:93.7px;width:112px;height:22px;border:1px solid #b4b8bd;border-radius:2.5px;background:linear-gradient(#f9f9fa,#e1e3e6);box-shadow:0 1px 1px rgba(0,0,0,.08);text-align:center;font-family:'DejaVu Sans Condensed','DejaVu Sans',sans-serif;font-size:8.7px;line-height:20px;letter-spacing:-.12px;color:#333;white-space:nowrap">СОЗДАТЬ ИГРУ</span>
  </div>
  <a class="abs" href="#" style="left:187px;top:255px;text-decoration:none;color:#1a6cae;white-space:nowrap;letter-spacing:-.65px">Правила игры</a>
  <span class="abs" style="right:26px;top:256px;white-space:nowrap;color:#333;letter-spacing:-.18px"><a href="#">Мои игры</a> | <a href="#">Отменить все игры</a> | <a href="#"><b style="letter-spacing:-.08px">Обновить список игр</b></a></span>
  <!-- TABLE -->
  <div id="thead" class="abs" style="left:187px;top:279px;width:517px;height:27.5px;background:linear-gradient(#ffffff,#f4f4f4 30%,#d9d9d9 75%,#c2c2c2);border-radius:13px 0 0 13px">
   <span class="th" style="left:0px;width:121px">Пользователь</span>
   <span class="th" style="left:121px;width:52px">Сумма</span>
   <span class="th" style="left:173px;width:53px">Время</span>
   <span class="th" style="left:226px;width:30px">MD5</span>
   <span class="th" style="left:256px;width:127px">Предмет</span>
   <span class="th" style="left:383px;width:111px">Действие</span>
   <i class="vs" style="left:120px"></i>
   <i class="vs" style="left:172px"></i>
   <i class="vs" style="left:225px"></i>
   <i class="vs" style="left:255px"></i>
   <i class="vs" style="left:382px"></i>
  </div>
  <div class="row" style="top:310.00px">
   <a class="abs" href="#" style="left:0;width:120px;text-align:center;top:-.5px;line-height:11px;letter-spacing:-.6px">qaqa</a>
   <b class="abs" style="left:119.5px;width:52px;text-align:center;top:0;line-height:11px;color:#1a1a1a;letter-spacing:-.3px">50 руб.</b>
   <span class="abs" style="left:172px;width:53px;text-align:center;top:-.3px;line-height:11px;color:#222;letter-spacing:-.45px">03:34</span>
   <svg class="abs" style="left:233px;top:2px" width="15" height="18" viewBox="0 0 15 18"><defs><linearGradient id="sh" x1="0" y1="0" x2="0" y2="1"><stop offset="0" stop-color="#72b4cc"/><stop offset="1" stop-color="#3a6c88"/></linearGradient></defs><path d="M7.5.6C5.5 2.2 3 2.6.8 2.6v7.2c0 3.8 3.2 6.2 6.7 7.6 3.5-1.4 6.7-3.8 6.7-7.6V2.6c-2.2 0-4.7-.4-6.7-2z" fill="#ececec" stroke="#cfcfcf" stroke-width=".7"/><path d="M7.5 2.8C6 3.9 4.3 4.3 2.8 4.3v5.3c0 2.7 2.2 4.5 4.7 5.6 2.5-1.1 4.7-2.9 4.7-5.6V4.3c-1.5 0-3.2-.4-4.7-1.5z" fill="url(#sh)"/><path d="M5 8.8l1.8 1.8 3.2-3.4" fill="none" stroke="#fff" stroke-width="1.4"/></svg>
   <svg class="abs" style="left:286.5px;top:3.5px;opacity:0.22" width="18" height="18" viewBox="0 0 18 18"><circle cx="9.8" cy="10" r="8" fill="#9e9e9e"/><circle cx="8.6" cy="8.8" r="8" fill="#f6f6f6" stroke="#d0d0d0" stroke-width=".7"/><path d="M8.8 5.6l1 1.8 3.4-1.7-1.5 3.2-1.7.7.7 1-1.9 1.9-1.9-1.9.7-1-1.7-.7-1.5-3.2 3.4 1.7z" fill="#9c9c9c"/></svg><svg class="abs" style="left:313px;top:3.5px;opacity:1" width="18" height="18" viewBox="0 0 18 18"><circle cx="9.8" cy="10" r="8" fill="#9e9e9e"/><circle cx="8.6" cy="8.8" r="8" fill="#f8f8f8" stroke="#d0d0d0" stroke-width=".7"/><text x="8.8" y="12.3" text-anchor="middle" font-family="Liberation Serif,serif" font-weight="bold" font-size="10" fill="#a2a2a2">1</text></svg>
   <svg class="abs" style="left:338px;top:2.3px" width="16" height="20" viewBox="0 0 16 20"><text x="8" y="16.5" text-anchor="middle" font-family="Liberation Sans,sans-serif" font-weight="bold" font-size="18" fill="#fbfbfb" stroke="#e4e4e4" stroke-width="1.2" stroke-linejoin="round" transform="translate(8 0) scale(.86 1) translate(-8 0)" paint-order="stroke">?</text></svg>
   <i class="vs2" style="left:120px;height:8px"></i><i class="vs2" style="left:172px;height:8px"></i><i class="vs2" style="left:225px"></i><i class="vs2" style="left:382px"></i>
   <span class="btn"><span class="b1">Отмена</span><span class="b2">$</span></span>
  </div>
  <div class="row" style="top:335.78px">
   <a class="abs" href="#" style="left:0;width:120px;text-align:center;top:-.5px;line-height:11px;letter-spacing:-.6px">qaqa</a>
   <b class="abs" style="left:119.5px;width:52px;text-align:center;top:0;line-height:11px;color:#1a1a1a;letter-spacing:-.3px">50 руб.</b>
   <span class="abs" style="left:172px;width:53px;text-align:center;top:-.3px;line-height:11px;color:#222;letter-spacing:-.45px">03:34</span>
   <svg class="abs" style="left:233px;top:2px" width="15" height="18" viewBox="0 0 15 18"><defs><linearGradient id="sh" x1="0" y1="0" x2="0" y2="1"><stop offset="0" stop-color="#72b4cc"/><stop offset="1" stop-color="#3a6c88"/></linearGradient></defs><path d="M7.5.6C5.5 2.2 3 2.6.8 2.6v7.2c0 3.8 3.2 6.2 6.7 7.6 3.5-1.4 6.7-3.8 6.7-7.6V2.6c-2.2 0-4.7-.4-6.7-2z" fill="#ececec" stroke="#cfcfcf" stroke-width=".7"/><path d="M7.5 2.8C6 3.9 4.3 4.3 2.8 4.3v5.3c0 2.7 2.2 4.5 4.7 5.6 2.5-1.1 4.7-2.9 4.7-5.6V4.3c-1.5 0-3.2-.4-4.7-1.5z" fill="url(#sh)"/><path d="M5 8.8l1.8 1.8 3.2-3.4" fill="none" stroke="#fff" stroke-width="1.4"/></svg>
   <svg class="abs" style="left:286.5px;top:3.5px;opacity:0.22" width="18" height="18" viewBox="0 0 18 18"><circle cx="9.8" cy="10" r="8" fill="#9e9e9e"/><circle cx="8.6" cy="8.8" r="8" fill="#f6f6f6" stroke="#d0d0d0" stroke-width=".7"/><path d="M8.8 5.6l1 1.8 3.4-1.7-1.5 3.2-1.7.7.7 1-1.9 1.9-1.9-1.9.7-1-1.7-.7-1.5-3.2 3.4 1.7z" fill="#9c9c9c"/></svg><svg class="abs" style="left:313px;top:3.5px;opacity:1" width="18" height="18" viewBox="0 0 18 18"><circle cx="9.8" cy="10" r="8" fill="#9e9e9e"/><circle cx="8.6" cy="8.8" r="8" fill="#f8f8f8" stroke="#d0d0d0" stroke-width=".7"/><text x="8.8" y="12.3" text-anchor="middle" font-family="Liberation Serif,serif" font-weight="bold" font-size="10" fill="#a2a2a2">1</text></svg>
   <svg class="abs" style="left:338px;top:2.3px" width="16" height="20" viewBox="0 0 16 20"><text x="8" y="16.5" text-anchor="middle" font-family="Liberation Sans,sans-serif" font-weight="bold" font-size="18" fill="#fbfbfb" stroke="#e4e4e4" stroke-width="1.2" stroke-linejoin="round" transform="translate(8 0) scale(.86 1) translate(-8 0)" paint-order="stroke">?</text></svg>
   <i class="vs2" style="left:120px;height:8px"></i><i class="vs2" style="left:172px;height:8px"></i><i class="vs2" style="left:225px"></i><i class="vs2" style="left:382px"></i>
   <span class="btn"><span class="b1">Отмена</span><span class="b2">$</span></span>
  </div>
  <div class="row" style="top:361.56px">
   <a class="abs" href="#" style="left:0;width:120px;text-align:center;top:-.5px;line-height:11px;letter-spacing:-.6px">qaqa</a>
   <b class="abs" style="left:119.5px;width:52px;text-align:center;top:0;line-height:11px;color:#1a1a1a;letter-spacing:-.3px">50 руб.</b>
   <span class="abs" style="left:172px;width:53px;text-align:center;top:-.3px;line-height:11px;color:#222;letter-spacing:-.45px">03:34</span>
   <svg class="abs" style="left:233px;top:2px" width="15" height="18" viewBox="0 0 15 18"><defs><linearGradient id="sh" x1="0" y1="0" x2="0" y2="1"><stop offset="0" stop-color="#72b4cc"/><stop offset="1" stop-color="#3a6c88"/></linearGradient></defs><path d="M7.5.6C5.5 2.2 3 2.6.8 2.6v7.2c0 3.8 3.2 6.2 6.7 7.6 3.5-1.4 6.7-3.8 6.7-7.6V2.6c-2.2 0-4.7-.4-6.7-2z" fill="#ececec" stroke="#cfcfcf" stroke-width=".7"/><path d="M7.5 2.8C6 3.9 4.3 4.3 2.8 4.3v5.3c0 2.7 2.2 4.5 4.7 5.6 2.5-1.1 4.7-2.9 4.7-5.6V4.3c-1.5 0-3.2-.4-4.7-1.5z" fill="url(#sh)"/><path d="M5 8.8l1.8 1.8 3.2-3.4" fill="none" stroke="#fff" stroke-width="1.4"/></svg>
   <svg class="abs" style="left:286.5px;top:3.5px;opacity:1" width="18" height="18" viewBox="0 0 18 18"><circle cx="9.8" cy="10" r="8" fill="#9e9e9e"/><circle cx="8.6" cy="8.8" r="8" fill="#f6f6f6" stroke="#d0d0d0" stroke-width=".7"/><path d="M8.8 5.6l1 1.8 3.4-1.7-1.5 3.2-1.7.7.7 1-1.9 1.9-1.9-1.9.7-1-1.7-.7-1.5-3.2 3.4 1.7z" fill="#9c9c9c"/></svg><svg class="abs" style="left:313px;top:3.5px;opacity:0.22" width="18" height="18" viewBox="0 0 18 18"><circle cx="9.8" cy="10" r="8" fill="#9e9e9e"/><circle cx="8.6" cy="8.8" r="8" fill="#f8f8f8" stroke="#d0d0d0" stroke-width=".7"/><text x="8.8" y="12.3" text-anchor="middle" font-family="Liberation Serif,serif" font-weight="bold" font-size="10" fill="#a2a2a2">1</text></svg>
   <svg class="abs" style="left:338px;top:2.3px" width="16" height="20" viewBox="0 0 16 20"><text x="8" y="16.5" text-anchor="middle" font-family="Liberation Sans,sans-serif" font-weight="bold" font-size="18" fill="#fbfbfb" stroke="#e4e4e4" stroke-width="1.2" stroke-linejoin="round" transform="translate(8 0) scale(.86 1) translate(-8 0)" paint-order="stroke">?</text></svg>
   <i class="vs2" style="left:120px;height:8px"></i><i class="vs2" style="left:172px;height:8px"></i><i class="vs2" style="left:225px"></i><i class="vs2" style="left:382px"></i>
   <span class="btn"><span class="b1">Отмена</span><span class="b2">$</span></span>
  </div>
  <div class="row" style="top:387.34px">
   <a class="abs" href="#" style="left:0;width:120px;text-align:center;top:-.5px;line-height:11px;letter-spacing:-.6px">qaqa</a>
   <b class="abs" style="left:119.5px;width:52px;text-align:center;top:0;line-height:11px;color:#1a1a1a;letter-spacing:-.3px">50 руб.</b>
   <span class="abs" style="left:172px;width:53px;text-align:center;top:-.3px;line-height:11px;color:#222;letter-spacing:-.45px">03:34</span>
   <svg class="abs" style="left:233px;top:2px" width="15" height="18" viewBox="0 0 15 18"><defs><linearGradient id="sh" x1="0" y1="0" x2="0" y2="1"><stop offset="0" stop-color="#72b4cc"/><stop offset="1" stop-color="#3a6c88"/></linearGradient></defs><path d="M7.5.6C5.5 2.2 3 2.6.8 2.6v7.2c0 3.8 3.2 6.2 6.7 7.6 3.5-1.4 6.7-3.8 6.7-7.6V2.6c-2.2 0-4.7-.4-6.7-2z" fill="#ececec" stroke="#cfcfcf" stroke-width=".7"/><path d="M7.5 2.8C6 3.9 4.3 4.3 2.8 4.3v5.3c0 2.7 2.2 4.5 4.7 5.6 2.5-1.1 4.7-2.9 4.7-5.6V4.3c-1.5 0-3.2-.4-4.7-1.5z" fill="url(#sh)"/><path d="M5 8.8l1.8 1.8 3.2-3.4" fill="none" stroke="#fff" stroke-width="1.4"/></svg>
   <svg class="abs" style="left:286.5px;top:3.5px;opacity:0.22" width="18" height="18" viewBox="0 0 18 18"><circle cx="9.8" cy="10" r="8" fill="#9e9e9e"/><circle cx="8.6" cy="8.8" r="8" fill="#f6f6f6" stroke="#d0d0d0" stroke-width=".7"/><path d="M8.8 5.6l1 1.8 3.4-1.7-1.5 3.2-1.7.7.7 1-1.9 1.9-1.9-1.9.7-1-1.7-.7-1.5-3.2 3.4 1.7z" fill="#9c9c9c"/></svg><svg class="abs" style="left:313px;top:3.5px;opacity:1" width="18" height="18" viewBox="0 0 18 18"><circle cx="9.8" cy="10" r="8" fill="#9e9e9e"/><circle cx="8.6" cy="8.8" r="8" fill="#f8f8f8" stroke="#d0d0d0" stroke-width=".7"/><text x="8.8" y="12.3" text-anchor="middle" font-family="Liberation Serif,serif" font-weight="bold" font-size="10" fill="#a2a2a2">1</text></svg>
   <svg class="abs" style="left:338px;top:2.3px" width="16" height="20" viewBox="0 0 16 20"><text x="8" y="16.5" text-anchor="middle" font-family="Liberation Sans,sans-serif" font-weight="bold" font-size="18" fill="#fbfbfb" stroke="#e4e4e4" stroke-width="1.2" stroke-linejoin="round" transform="translate(8 0) scale(.86 1) translate(-8 0)" paint-order="stroke">?</text></svg>
   <i class="vs2" style="left:120px;height:8px"></i><i class="vs2" style="left:172px;height:8px"></i><i class="vs2" style="left:225px"></i><i class="vs2" style="left:382px"></i>
   <span class="btn"><span class="b1">Отмена</span><span class="b2">$</span></span>
  </div>
  <div class="row" style="top:413.12px">
   <a class="abs" href="#" style="left:0;width:120px;text-align:center;top:-.5px;line-height:11px;letter-spacing:-.6px">qaqa</a>
   <b class="abs" style="left:119.5px;width:52px;text-align:center;top:0;line-height:11px;color:#1a1a1a;letter-spacing:-.3px">50 руб.</b>
   <span class="abs" style="left:172px;width:53px;text-align:center;top:-.3px;line-height:11px;color:#222;letter-spacing:-.45px">03:34</span>
   <svg class="abs" style="left:233px;top:2px" width="15" height="18" viewBox="0 0 15 18"><defs><linearGradient id="sh" x1="0" y1="0" x2="0" y2="1"><stop offset="0" stop-color="#72b4cc"/><stop offset="1" stop-color="#3a6c88"/></linearGradient></defs><path d="M7.5.6C5.5 2.2 3 2.6.8 2.6v7.2c0 3.8 3.2 6.2 6.7 7.6 3.5-1.4 6.7-3.8 6.7-7.6V2.6c-2.2 0-4.7-.4-6.7-2z" fill="#ececec" stroke="#cfcfcf" stroke-width=".7"/><path d="M7.5 2.8C6 3.9 4.3 4.3 2.8 4.3v5.3c0 2.7 2.2 4.5 4.7 5.6 2.5-1.1 4.7-2.9 4.7-5.6V4.3c-1.5 0-3.2-.4-4.7-1.5z" fill="url(#sh)"/><path d="M5 8.8l1.8 1.8 3.2-3.4" fill="none" stroke="#fff" stroke-width="1.4"/></svg>
   <svg class="abs" style="left:286.5px;top:3.5px;opacity:0.22" width="18" height="18" viewBox="0 0 18 18"><circle cx="9.8" cy="10" r="8" fill="#9e9e9e"/><circle cx="8.6" cy="8.8" r="8" fill="#f6f6f6" stroke="#d0d0d0" stroke-width=".7"/><path d="M8.8 5.6l1 1.8 3.4-1.7-1.5 3.2-1.7.7.7 1-1.9 1.9-1.9-1.9.7-1-1.7-.7-1.5-3.2 3.4 1.7z" fill="#9c9c9c"/></svg><svg class="abs" style="left:313px;top:3.5px;opacity:1" width="18" height="18" viewBox="0 0 18 18"><circle cx="9.8" cy="10" r="8" fill="#9e9e9e"/><circle cx="8.6" cy="8.8" r="8" fill="#f8f8f8" stroke="#d0d0d0" stroke-width=".7"/><text x="8.8" y="12.3" text-anchor="middle" font-family="Liberation Serif,serif" font-weight="bold" font-size="10" fill="#a2a2a2">1</text></svg>
   <svg class="abs" style="left:338px;top:2.3px" width="16" height="20" viewBox="0 0 16 20"><text x="8" y="16.5" text-anchor="middle" font-family="Liberation Sans,sans-serif" font-weight="bold" font-size="18" fill="#fbfbfb" stroke="#e4e4e4" stroke-width="1.2" stroke-linejoin="round" transform="translate(8 0) scale(.86 1) translate(-8 0)" paint-order="stroke">?</text></svg>
   <i class="vs2" style="left:120px;height:8px"></i><i class="vs2" style="left:172px;height:8px"></i><i class="vs2" style="left:225px"></i><i class="vs2" style="left:382px"></i>
   <span class="btn"><span class="b1">Отмена</span><span class="b2">$</span></span>
  </div>
  <div class="row" style="top:438.90px">
   <a class="abs" href="#" style="left:0;width:120px;text-align:center;top:-.5px;line-height:11px;letter-spacing:-.6px">qaqa</a>
   <b class="abs" style="left:119.5px;width:52px;text-align:center;top:0;line-height:11px;color:#1a1a1a;letter-spacing:-.3px">50 руб.</b>
   <span class="abs" style="left:172px;width:53px;text-align:center;top:-.3px;line-height:11px;color:#222;letter-spacing:-.45px">03:34</span>
   <svg class="abs" style="left:233px;top:2px" width="15" height="18" viewBox="0 0 15 18"><defs><linearGradient id="sh" x1="0" y1="0" x2="0" y2="1"><stop offset="0" stop-color="#72b4cc"/><stop offset="1" stop-color="#3a6c88"/></linearGradient></defs><path d="M7.5.6C5.5 2.2 3 2.6.8 2.6v7.2c0 3.8 3.2 6.2 6.7 7.6 3.5-1.4 6.7-3.8 6.7-7.6V2.6c-2.2 0-4.7-.4-6.7-2z" fill="#ececec" stroke="#cfcfcf" stroke-width=".7"/><path d="M7.5 2.8C6 3.9 4.3 4.3 2.8 4.3v5.3c0 2.7 2.2 4.5 4.7 5.6 2.5-1.1 4.7-2.9 4.7-5.6V4.3c-1.5 0-3.2-.4-4.7-1.5z" fill="url(#sh)"/><path d="M5 8.8l1.8 1.8 3.2-3.4" fill="none" stroke="#fff" stroke-width="1.4"/></svg>
   <svg class="abs" style="left:286.5px;top:3.5px;opacity:1" width="18" height="18" viewBox="0 0 18 18"><circle cx="9.8" cy="10" r="8" fill="#9e9e9e"/><circle cx="8.6" cy="8.8" r="8" fill="#f6f6f6" stroke="#d0d0d0" stroke-width=".7"/><path d="M8.8 5.6l1 1.8 3.4-1.7-1.5 3.2-1.7.7.7 1-1.9 1.9-1.9-1.9.7-1-1.7-.7-1.5-3.2 3.4 1.7z" fill="#9c9c9c"/></svg><svg class="abs" style="left:313px;top:3.5px;opacity:0.22" width="18" height="18" viewBox="0 0 18 18"><circle cx="9.8" cy="10" r="8" fill="#9e9e9e"/><circle cx="8.6" cy="8.8" r="8" fill="#f8f8f8" stroke="#d0d0d0" stroke-width=".7"/><text x="8.8" y="12.3" text-anchor="middle" font-family="Liberation Serif,serif" font-weight="bold" font-size="10" fill="#a2a2a2">1</text></svg>
   <svg class="abs" style="left:338px;top:2.3px" width="16" height="20" viewBox="0 0 16 20"><text x="8" y="16.5" text-anchor="middle" font-family="Liberation Sans,sans-serif" font-weight="bold" font-size="18" fill="#fbfbfb" stroke="#e4e4e4" stroke-width="1.2" stroke-linejoin="round" transform="translate(8 0) scale(.86 1) translate(-8 0)" paint-order="stroke">?</text></svg>
   <i class="vs2" style="left:120px;height:8px"></i><i class="vs2" style="left:172px;height:8px"></i><i class="vs2" style="left:225px"></i><i class="vs2" style="left:382px"></i>
   <span class="btn"><span class="b1">Отмена</span><span class="b2">$</span></span>
  </div>
  <div class="row" style="top:464.68px">
   <a class="abs" href="#" style="left:0;width:120px;text-align:center;top:-.5px;line-height:11px;letter-spacing:-.6px">qaqa</a>
   <b class="abs" style="left:119.5px;width:52px;text-align:center;top:0;line-height:11px;color:#1a1a1a;letter-spacing:-.3px">50 руб.</b>
   <span class="abs" style="left:172px;width:53px;text-align:center;top:-.3px;line-height:11px;color:#222;letter-spacing:-.45px">03:34</span>
   <svg class="abs" style="left:233px;top:2px" width="15" height="18" viewBox="0 0 15 18"><defs><linearGradient id="sh" x1="0" y1="0" x2="0" y2="1"><stop offset="0" stop-color="#72b4cc"/><stop offset="1" stop-color="#3a6c88"/></linearGradient></defs><path d="M7.5.6C5.5 2.2 3 2.6.8 2.6v7.2c0 3.8 3.2 6.2 6.7 7.6 3.5-1.4 6.7-3.8 6.7-7.6V2.6c-2.2 0-4.7-.4-6.7-2z" fill="#ececec" stroke="#cfcfcf" stroke-width=".7"/><path d="M7.5 2.8C6 3.9 4.3 4.3 2.8 4.3v5.3c0 2.7 2.2 4.5 4.7 5.6 2.5-1.1 4.7-2.9 4.7-5.6V4.3c-1.5 0-3.2-.4-4.7-1.5z" fill="url(#sh)"/><path d="M5 8.8l1.8 1.8 3.2-3.4" fill="none" stroke="#fff" stroke-width="1.4"/></svg>
   <svg class="abs" style="left:286.5px;top:3.5px;opacity:1" width="18" height="18" viewBox="0 0 18 18"><circle cx="9.8" cy="10" r="8" fill="#9e9e9e"/><circle cx="8.6" cy="8.8" r="8" fill="#f6f6f6" stroke="#d0d0d0" stroke-width=".7"/><path d="M8.8 5.6l1 1.8 3.4-1.7-1.5 3.2-1.7.7.7 1-1.9 1.9-1.9-1.9.7-1-1.7-.7-1.5-3.2 3.4 1.7z" fill="#9c9c9c"/></svg><svg class="abs" style="left:313px;top:3.5px;opacity:0.22" width="18" height="18" viewBox="0 0 18 18"><circle cx="9.8" cy="10" r="8" fill="#9e9e9e"/><circle cx="8.6" cy="8.8" r="8" fill="#f8f8f8" stroke="#d0d0d0" stroke-width=".7"/><text x="8.8" y="12.3" text-anchor="middle" font-family="Liberation Serif,serif" font-weight="bold" font-size="10" fill="#a2a2a2">1</text></svg>
   <svg class="abs" style="left:338px;top:2.3px" width="16" height="20" viewBox="0 0 16 20"><text x="8" y="16.5" text-anchor="middle" font-family="Liberation Sans,sans-serif" font-weight="bold" font-size="18" fill="#fbfbfb" stroke="#e4e4e4" stroke-width="1.2" stroke-linejoin="round" transform="translate(8 0) scale(.86 1) translate(-8 0)" paint-order="stroke">?</text></svg>
   <i class="vs2" style="left:120px;height:8px"></i><i class="vs2" style="left:172px;height:8px"></i><i class="vs2" style="left:225px"></i><i class="vs2" style="left:382px"></i>
   <span class="btn"><span class="b1">Отмена</span><span class="b2">$</span></span>
  </div>
  <div class="row" style="top:490.46px">
   <a class="abs" href="#" style="left:0;width:120px;text-align:center;top:-.5px;line-height:11px;letter-spacing:-.6px">qaqa</a>
   <b class="abs" style="left:119.5px;width:52px;text-align:center;top:0;line-height:11px;color:#1a1a1a;letter-spacing:-.3px">50 руб.</b>
   <span class="abs" style="left:172px;width:53px;text-align:center;top:-.3px;line-height:11px;color:#222;letter-spacing:-.45px">03:34</span>
   <svg class="abs" style="left:233px;top:2px" width="15" height="18" viewBox="0 0 15 18"><defs><linearGradient id="sh" x1="0" y1="0" x2="0" y2="1"><stop offset="0" stop-color="#72b4cc"/><stop offset="1" stop-color="#3a6c88"/></linearGradient></defs><path d="M7.5.6C5.5 2.2 3 2.6.8 2.6v7.2c0 3.8 3.2 6.2 6.7 7.6 3.5-1.4 6.7-3.8 6.7-7.6V2.6c-2.2 0-4.7-.4-6.7-2z" fill="#ececec" stroke="#cfcfcf" stroke-width=".7"/><path d="M7.5 2.8C6 3.9 4.3 4.3 2.8 4.3v5.3c0 2.7 2.2 4.5 4.7 5.6 2.5-1.1 4.7-2.9 4.7-5.6V4.3c-1.5 0-3.2-.4-4.7-1.5z" fill="url(#sh)"/><path d="M5 8.8l1.8 1.8 3.2-3.4" fill="none" stroke="#fff" stroke-width="1.4"/></svg>
   <svg class="abs" style="left:286.5px;top:3.5px;opacity:1" width="18" height="18" viewBox="0 0 18 18"><circle cx="9.8" cy="10" r="8" fill="#9e9e9e"/><circle cx="8.6" cy="8.8" r="8" fill="#f6f6f6" stroke="#d0d0d0" stroke-width=".7"/><path d="M8.8 5.6l1 1.8 3.4-1.7-1.5 3.2-1.7.7.7 1-1.9 1.9-1.9-1.9.7-1-1.7-.7-1.5-3.2 3.4 1.7z" fill="#9c9c9c"/></svg><svg class="abs" style="left:313px;top:3.5px;opacity:0.22" width="18" height="18" viewBox="0 0 18 18"><circle cx="9.8" cy="10" r="8" fill="#9e9e9e"/><circle cx="8.6" cy="8.8" r="8" fill="#f8f8f8" stroke="#d0d0d0" stroke-width=".7"/><text x="8.8" y="12.3" text-anchor="middle" font-family="Liberation Serif,serif" font-weight="bold" font-size="10" fill="#a2a2a2">1</text></svg>
   <svg class="abs" style="left:338px;top:2.3px" width="16" height="20" viewBox="0 0 16 20"><text x="8" y="16.5" text-anchor="middle" font-family="Liberation Sans,sans-serif" font-weight="bold" font-size="18" fill="#fbfbfb" stroke="#e4e4e4" stroke-width="1.2" stroke-linejoin="round" transform="translate(8 0) scale(.86 1) translate(-8 0)" paint-order="stroke">?</text></svg>
   <i class="vs2" style="left:120px;height:8px"></i><i class="vs2" style="left:172px;height:8px"></i><i class="vs2" style="left:225px"></i><i class="vs2" style="left:382px"></i>
   <span class="btn"><span class="b1">Отмена</span><span class="b2">$</span></span>
  </div>
  <div class="row" style="top:516.24px">
   <a class="abs" href="#" style="left:0;width:120px;text-align:center;top:-.5px;line-height:11px;letter-spacing:-.6px">qaqa</a>
   <b class="abs" style="left:119.5px;width:52px;text-align:center;top:0;line-height:11px;color:#1a1a1a;letter-spacing:-.3px">50 руб.</b>
   <span class="abs" style="left:172px;width:53px;text-align:center;top:-.3px;line-height:11px;color:#222;letter-spacing:-.45px">03:34</span>
   <svg class="abs" style="left:233px;top:2px" width="15" height="18" viewBox="0 0 15 18"><defs><linearGradient id="sh" x1="0" y1="0" x2="0" y2="1"><stop offset="0" stop-color="#72b4cc"/><stop offset="1" stop-color="#3a6c88"/></linearGradient></defs><path d="M7.5.6C5.5 2.2 3 2.6.8 2.6v7.2c0 3.8 3.2 6.2 6.7 7.6 3.5-1.4 6.7-3.8 6.7-7.6V2.6c-2.2 0-4.7-.4-6.7-2z" fill="#ececec" stroke="#cfcfcf" stroke-width=".7"/><path d="M7.5 2.8C6 3.9 4.3 4.3 2.8 4.3v5.3c0 2.7 2.2 4.5 4.7 5.6 2.5-1.1 4.7-2.9 4.7-5.6V4.3c-1.5 0-3.2-.4-4.7-1.5z" fill="url(#sh)"/><path d="M5 8.8l1.8 1.8 3.2-3.4" fill="none" stroke="#fff" stroke-width="1.4"/></svg>
   <svg class="abs" style="left:286.5px;top:3.5px;opacity:1" width="18" height="18" viewBox="0 0 18 18"><circle cx="9.8" cy="10" r="8" fill="#9e9e9e"/><circle cx="8.6" cy="8.8" r="8" fill="#f6f6f6" stroke="#d0d0d0" stroke-width=".7"/><path d="M8.8 5.6l1 1.8 3.4-1.7-1.5 3.2-1.7.7.7 1-1.9 1.9-1.9-1.9.7-1-1.7-.7-1.5-3.2 3.4 1.7z" fill="#9c9c9c"/></svg><svg class="abs" style="left:313px;top:3.5px;opacity:0.22" width="18" height="18" viewBox="0 0 18 18"><circle cx="9.8" cy="10" r="8" fill="#9e9e9e"/><circle cx="8.6" cy="8.8" r="8" fill="#f8f8f8" stroke="#d0d0d0" stroke-width=".7"/><text x="8.8" y="12.3" text-anchor="middle" font-family="Liberation Serif,serif" font-weight="bold" font-size="10" fill="#a2a2a2">1</text></svg>
   <svg class="abs" style="left:338px;top:2.3px" width="16" height="20" viewBox="0 0 16 20"><text x="8" y="16.5" text-anchor="middle" font-family="Liberation Sans,sans-serif" font-weight="bold" font-size="18" fill="#fbfbfb" stroke="#e4e4e4" stroke-width="1.2" stroke-linejoin="round" transform="translate(8 0) scale(.86 1) translate(-8 0)" paint-order="stroke">?</text></svg>
   <i class="vs2" style="left:120px;height:8px"></i><i class="vs2" style="left:172px;height:8px"></i><i class="vs2" style="left:225px"></i><i class="vs2" style="left:382px"></i>
   <span class="btn"><span class="b1">Отмена</span><span class="b2">$</span></span>
  </div>
  <div class="row" style="top:542.02px">
   <a class="abs" href="#" style="left:0;width:120px;text-align:center;top:-.5px;line-height:11px;letter-spacing:-.6px">qaqa</a>
   <b class="abs" style="left:119.5px;width:52px;text-align:center;top:0;line-height:11px;color:#1a1a1a;letter-spacing:-.3px">50 руб.</b>
   <span class="abs" style="left:172px;width:53px;text-align:center;top:-.3px;line-height:11px;color:#222;letter-spacing:-.45px">03:34</span>
   <svg class="abs" style="left:233px;top:2px" width="15" height="18" viewBox="0 0 15 18"><defs><linearGradient id="sh" x1="0" y1="0" x2="0" y2="1"><stop offset="0" stop-color="#72b4cc"/><stop offset="1" stop-color="#3a6c88"/></linearGradient></defs><path d="M7.5.6C5.5 2.2 3 2.6.8 2.6v7.2c0 3.8 3.2 6.2 6.7 7.6 3.5-1.4 6.7-3.8 6.7-7.6V2.6c-2.2 0-4.7-.4-6.7-2z" fill="#ececec" stroke="#cfcfcf" stroke-width=".7"/><path d="M7.5 2.8C6 3.9 4.3 4.3 2.8 4.3v5.3c0 2.7 2.2 4.5 4.7 5.6 2.5-1.1 4.7-2.9 4.7-5.6V4.3c-1.5 0-3.2-.4-4.7-1.5z" fill="url(#sh)"/><path d="M5 8.8l1.8 1.8 3.2-3.4" fill="none" stroke="#fff" stroke-width="1.4"/></svg>
   <svg class="abs" style="left:286.5px;top:3.5px;opacity:1" width="18" height="18" viewBox="0 0 18 18"><circle cx="9.8" cy="10" r="8" fill="#9e9e9e"/><circle cx="8.6" cy="8.8" r="8" fill="#f6f6f6" stroke="#d0d0d0" stroke-width=".7"/><path d="M8.8 5.6l1 1.8 3.4-1.7-1.5 3.2-1.7.7.7 1-1.9 1.9-1.9-1.9.7-1-1.7-.7-1.5-3.2 3.4 1.7z" fill="#9c9c9c"/></svg><svg class="abs" style="left:313px;top:3.5px;opacity:0.22" width="18" height="18" viewBox="0 0 18 18"><circle cx="9.8" cy="10" r="8" fill="#9e9e9e"/><circle cx="8.6" cy="8.8" r="8" fill="#f8f8f8" stroke="#d0d0d0" stroke-width=".7"/><text x="8.8" y="12.3" text-anchor="middle" font-family="Liberation Serif,serif" font-weight="bold" font-size="10" fill="#a2a2a2">1</text></svg>
   <svg class="abs" style="left:338px;top:2.3px" width="16" height="20" viewBox="0 0 16 20"><text x="8" y="16.5" text-anchor="middle" font-family="Liberation Sans,sans-serif" font-weight="bold" font-size="18" fill="#fbfbfb" stroke="#e4e4e4" stroke-width="1.2" stroke-linejoin="round" transform="translate(8 0) scale(.86 1) translate(-8 0)" paint-order="stroke">?</text></svg>
   <i class="vs2" style="left:120px;height:8px"></i><i class="vs2" style="left:172px;height:8px"></i><i class="vs2" style="left:225px"></i><i class="vs2" style="left:382px"></i>
   <span class="btn"><span class="b1">Отмена</span><span class="b2">$</span></span>
  </div>
 </div>
</div>
<svg class="abs" style="left:864px;top:590px" width="14" height="24" viewBox="0 0 14 24"><path d="M1 1v17.5l4-3.800 3 7 2.6-1.1-3-6.800h5.400z" fill="#fff" stroke="#111" stroke-width="1.1" stroke-linejoin="round"/></svg>
</body>
</html>
